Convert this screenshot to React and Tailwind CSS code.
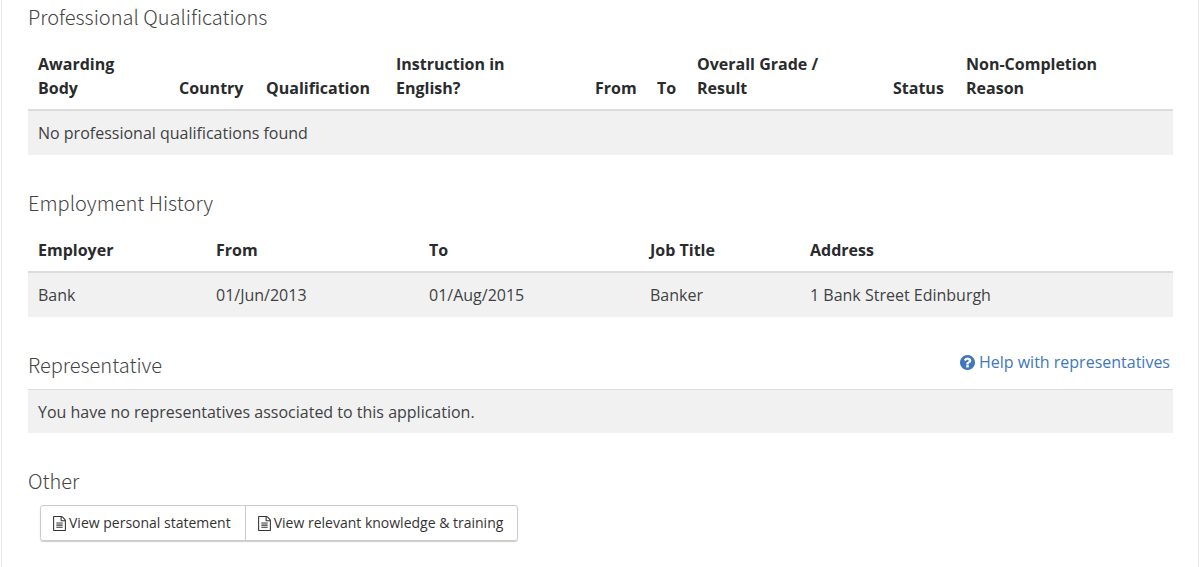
// App.jsx — application summary: qualifications, employment, representative

// Column widths are shared out over the full table width
const QUALIFICATION_COLUMNS = [
  { label: "Awarding\nBody", width: "w-[141px]" },
  { label: "Country", width: "w-[87px]" },
  { label: "Qualification", width: "w-[130px]" },
  { label: "Instruction in\nEnglish?", width: "w-[199px]" },
  { label: "From", width: "w-[62px]" },
  { label: "To", width: "w-[40px]" },
  { label: "Overall Grade /\nResult", width: "w-[196px]" },
  { label: "Status", width: "w-[73px]" },
  { label: "Non-Completion\nReason", width: "w-[217px]" },
];

const EMPLOYMENT_COLUMNS = [
  { label: "Employer", width: "w-[178px]" },
  { label: "From", width: "w-[213px]" },
  { label: "To", width: "w-[221px]" },
  { label: "Job Title", width: "w-[160px]" },
  { label: "Address", width: "w-[373px]" },
];

const EMPLOYMENT = [
  ["Bank", "01/Jun/2013", "01/Aug/2015", "Banker", "1 Bank Street Edinburgh"],
];

function FileIcon() {
  return (
    <svg viewBox="128 0 1536 1792" className="w-[13px] h-[15px] fill-current" aria-hidden="true">
      <path d="M1596 380q28 28 48 76t20 88v1152q0 40-28 68t-68 28h-1344q-40 0-68-28t-28-68v-1600q0-40 28-68t68-28h896q40 0 88 20t76 48zm-444-244v376h376q-10-29-22-41l-313-313q-12-12-41-22zm384 1528v-1024h-416q-40 0-68-28t-28-68v-416h-768v1536h1280zm-1024-864q0-14 9-23t23-9h704q14 0 23 9t9 23v64q0 14-9 23t-23 9h-704q-14 0-23-9t-9-23v-64zm736 224q14 0 23 9t9 23v64q0 14-9 23t-23 9h-704q-14 0-23-9t-9-23v-64q0-14 9-23t23-9h704zm0 256q14 0 23 9t9 23v64q0 14-9 23t-23 9h-704q-14 0-23-9t-9-23v-64q0-14 9-23t23-9h704z" />
    </svg>
  );
}

function HelpIcon() {
  return (
    <svg viewBox="128 128 1536 1536" className="w-[15px] h-[15px] fill-current" aria-hidden="true">
      <path d="M1024 1376v-192q0-14-9-23t-23-9h-192q-14 0-23 9t-9 23v192q0 14 9 23t23 9h192q14 0 23-9t9-23zm256-672q0-88-55.5-163t-138.5-116-170-41q-243 0-371 213-15 24 8 42l132 100q7 6 19 6 16 0 25-12 53-68 86-92 34-24 86-24 48 0 85.5 26t37.5 59q0 38-20 61t-68 45q-63 28-115.5 86.5t-52.5 125.5v36q0 14 9 23t23 9h192q14 0 23-9t9-23q0-19 21.5-49.5t54.5-49.5q32-18 49-28.5t46-35 44.5-48 28-60.5 12.5-81zm384 192q0 209-103 385.5t-279.5 279.5-385.5 103-385.5-103-279.5-279.5-103-385.5 103-385.5 279.5-279.5 385.5-103 385.5 103 279.5 279.5 103 385.5z" />
    </svg>
  );
}

function SectionTitle({ children }) {
  return (
    <h2 className="font-['Noto_Sans_CJK_SC','Open_Sans',sans-serif] font-light text-xl leading-6 text-[#444]">
      {children}
    </h2>
  );
}

function DataTable({ columns, children }) {
  return (
    <table className="w-full table-fixed border-collapse text-left">
      <thead>
        <tr className="border-b-2 border-[#dcdcdc]">
          {columns.map((col) => (
            <th
              key={col.label}
              scope="col"
              className={`${col.width} whitespace-pre-line px-[10px] pt-2 pb-[9px] align-bottom font-bold text-[#292b2c]`}
            >
              {col.label}
            </th>
          ))}
        </tr>
      </thead>
      <tbody className="bg-[#f1f1f1]">{children}</tbody>
    </table>
  );
}

export default function App() {
  return (
    <main className="mx-px min-h-screen border-x border-[#e6e6e6] bg-white pl-[26px] pr-[25px] pt-[5px] pb-5 font-['Open_Sans',sans-serif] text-base leading-6 text-[#3f4244]">
      <section>
        <SectionTitle>Professional Qualifications</SectionTitle>
        <div className="mt-[15px]">
          <DataTable columns={QUALIFICATION_COLUMNS}>
            <tr>
              <td colSpan={9} className="px-[10px] py-[10px]">
                No professional qualifications found
              </td>
            </tr>
          </DataTable>
        </div>
      </section>

      <section className="mt-9">
        <SectionTitle>Employment History</SectionTitle>
        <div className="mt-[15px]">
          <DataTable columns={EMPLOYMENT_COLUMNS}>
            {EMPLOYMENT.map((row) => (
              <tr key={row[0]}>
                {row.map((cell) => (
                  <td key={cell} className="px-[10px] py-[10px]">
                    {cell}
                  </td>
                ))}
              </tr>
            ))}
          </DataTable>
        </div>
      </section>

      <section className="mt-[33px]">
        <div className="flex items-start justify-between pr-[3px]">
          <div className="pt-[3px]">
            <SectionTitle>Representative</SectionTitle>
          </div>
          <a href="#help" className="flex items-center gap-1 text-[#4077bd] hover:underline">
            <HelpIcon />
            Help with representatives
          </a>
        </div>
        <p className="mt-3 border-t border-[#dcdcdc] bg-[#f1f1f1] px-[10px] pt-[10px] pb-[9px]">
          You have no representatives associated to this application.
        </p>
      </section>

      <section className="mt-9">
        <SectionTitle>Other</SectionTitle>
        <div className="ml-3 mt-3 inline-flex divide-x divide-[#ccc] rounded-[3px] border border-[#ccc] text-sm text-[#333] shadow-[0_1px_1px_#ccc]">
          <button type="button" className="flex h-[34px] items-center gap-[3px] pl-3 pr-[14px]">
            <FileIcon />
            View personal statement
          </button>
          <button type="button" className="flex h-[34px] items-center gap-[3px] pl-3 pr-[14px]">
            <FileIcon />
            View relevant knowledge &amp; training
          </button>
        </div>
      </section>
    </main>
  );
}
